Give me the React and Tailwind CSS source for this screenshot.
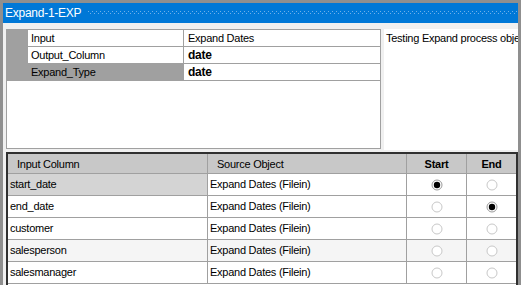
import React from "react";

const font = { fontFamily: '"Liberation Sans", Arial, sans-serif' };

function Radio({ on }) {
  return (
    <svg width="12" height="12" viewBox="0 0 12 12">
      <circle cx="6" cy="6" r="5" fill="#ffffff" stroke={on ? "#9a9a9a" : "#c8c8c8"} strokeWidth="1" />
      {on && <circle cx="6" cy="6" r="3.2" fill="#000000" />}
    </svg>
  );
}

const rows = [
  { name: "start_date", start: true, end: false, sel: true },
  { name: "end_date", start: false, end: true },
  { name: "customer", start: false, end: false },
  { name: "salesperson", start: false, end: false, alt: true },
  { name: "salesmanager", start: false, end: false },
];

export default function App() {
  return (
    <div className="w-[521px] h-[285px] bg-[#8f8f8f] pt-[3px] pl-[3px] pr-[3px] flex flex-col text-[11px] tracking-[-0.25px] text-black overflow-hidden" style={font}>
      <div className="h-[20px] bg-[#0078d7] flex items-center shrink-0">
        <span className="text-white text-[12px] pl-[2px] whitespace-nowrap">Expand-1-EXP</span>
        <svg className="flex-1 ml-[7px]" height="4" width="100%">
          <defs>
            <pattern id="dots" width="4" height="4" patternUnits="userSpaceOnUse">
              <rect x="0" y="0" width="1" height="1" fill="#6fb0ea" />
              <rect x="2" y="2" width="1" height="1" fill="#6fb0ea" />
            </pattern>
          </defs>
          <rect width="100%" height="4" fill="url(#dots)" />
        </svg>
      </div>
      <div className="flex-1 bg-[#f0f0f0] flex flex-col pl-[3px] pt-[6px]">
        <div className="flex h-[120px] shrink-0">
          <div className="w-[375px] h-[120px] border border-[#a0a0a0] bg-white">
            <div className="flex flex-col">
              {[
                { n: "Input", v: "Expand Dates", b: false },
                { n: "Output_Column", v: "date", b: true },
                { n: "Expand_Type", v: "date", b: true, sel: true },
              ].map((r) => (
                <div key={r.n} className="flex h-[17px]">
                  <div className="w-[21px] bg-[#a0a0a0]" />
                  <div className={`w-[156px] pl-[3px] leading-[16px] border-b border-r border-[#a0a0a0] ${r.sel ? "bg-[#a0a0a0]" : "bg-white"}`}>{r.n}</div>
                  <div className={`flex-1 pl-[4px] leading-[16px] border-b border-[#a0a0a0] ${r.b ? "font-bold text-[12px]" : ""}`}>{r.v}</div>
                </div>
              ))}
            </div>
          </div>
          <div className="w-[3px]" />
          <div className="flex-1 h-[121px] bg-white pl-[2px] pt-[1px] overflow-hidden whitespace-nowrap">Testing Expand process object</div>
        </div>
        <div className="mt-[3px] flex-1 border-t-2 border-l-2 border-r-2 border-[#303030] bg-white flex flex-col">
          <div className="flex h-[20px] bg-[#c8c8c8] border-b border-[#a0a0a0] shrink-0">
            <div className="w-[200px] pl-[9px] leading-[20px] border-r border-[#a0a0a0]">Input Column</div>
            <div className="w-[199px] pl-[9px] leading-[20px] border-r border-[#a0a0a0]">Source Object</div>
            <div className="w-[60px] text-center font-bold leading-[20px] border-r border-[#a0a0a0]">Start</div>
            <div className="flex-1 text-center font-bold leading-[20px]">End</div>
          </div>
          {rows.map((r) => (
            <div key={r.name} className={`flex h-[22px] border-b border-[#a0a0a0] shrink-0 ${r.alt ? "bg-[#f5f5f5]" : "bg-white"}`}>
              <div className={`w-[200px] pl-[2px] leading-[21px] border-r border-[#a0a0a0] ${r.sel ? "bg-[#d4d4d4]" : ""}`}>{r.name}</div>
              <div className="w-[199px] pl-[2px] leading-[21px] border-r border-[#a0a0a0]">Expand Dates (Filein)</div>
              <div className="w-[60px] flex items-center justify-center border-r border-[#a0a0a0]"><Radio on={r.start} /></div>
              <div className="flex-1 flex items-center justify-center"><Radio on={r.end} /></div>
            </div>
          ))}
        </div>
      </div>
    </div>
  );
}
